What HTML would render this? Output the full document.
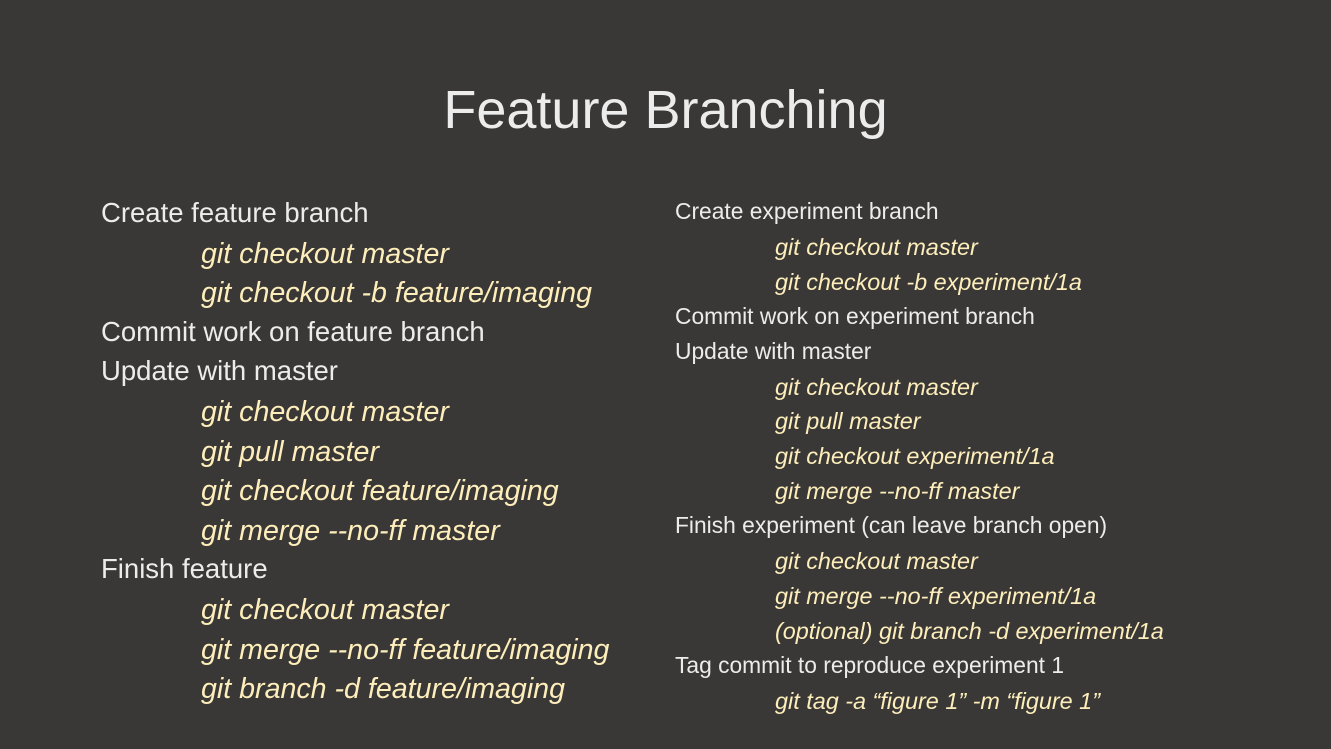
<!DOCTYPE html><html><head><style>
body{margin:0;width:1331px;height:749px;background:#3a3836;overflow:hidden;font-family:"Liberation Sans",sans-serif}
h1{position:absolute;top:78px;left:0;width:1331px;text-align:center;margin:0;font-weight:normal;font-size:54px;color:#ececec;line-height:64px}
.c{position:absolute;white-space:nowrap}
.l{left:101px;top:193px;font-size:27.5px;line-height:39.6px;color:#ececec}
.r{left:675px;top:194px;font-size:22.8px;line-height:34.9px;color:#ececec}
.y{color:#fdeebb;font-style:italic;position:relative}
.l .y{padding-left:100px;font-size:28.6px;top:2px}
.r .y{padding-left:100px;font-size:23.4px;top:1px}
</style></head><body>
<h1>Feature Branching</h1>
<div class="c l">
<div>Create feature branch</div>
<div class="y">git checkout master</div>
<div class="y">git checkout -b feature/imaging</div>
<div>Commit work on feature branch</div>
<div>Update with master</div>
<div class="y">git checkout master</div>
<div class="y">git pull master</div>
<div class="y">git checkout feature/imaging</div>
<div class="y">git merge --no-ff master</div>
<div>Finish feature</div>
<div class="y">git checkout master</div>
<div class="y">git merge --no-ff feature/imaging</div>
<div class="y">git branch -d feature/imaging</div>
</div>
<div class="c r">
<div>Create experiment branch</div>
<div class="y">git checkout master</div>
<div class="y">git checkout -b experiment/1a</div>
<div>Commit work on experiment branch</div>
<div>Update with master</div>
<div class="y">git checkout master</div>
<div class="y">git pull master</div>
<div class="y">git checkout experiment/1a</div>
<div class="y">git merge --no-ff master</div>
<div>Finish experiment (can leave branch open)</div>
<div class="y">git checkout master</div>
<div class="y">git merge --no-ff experiment/1a</div>
<div class="y">(optional) git branch -d experiment/1a</div>
<div>Tag commit to reproduce experiment 1</div>
<div class="y">git tag -a “figure 1” -m “figure 1”</div>
</div>
</body></html>
